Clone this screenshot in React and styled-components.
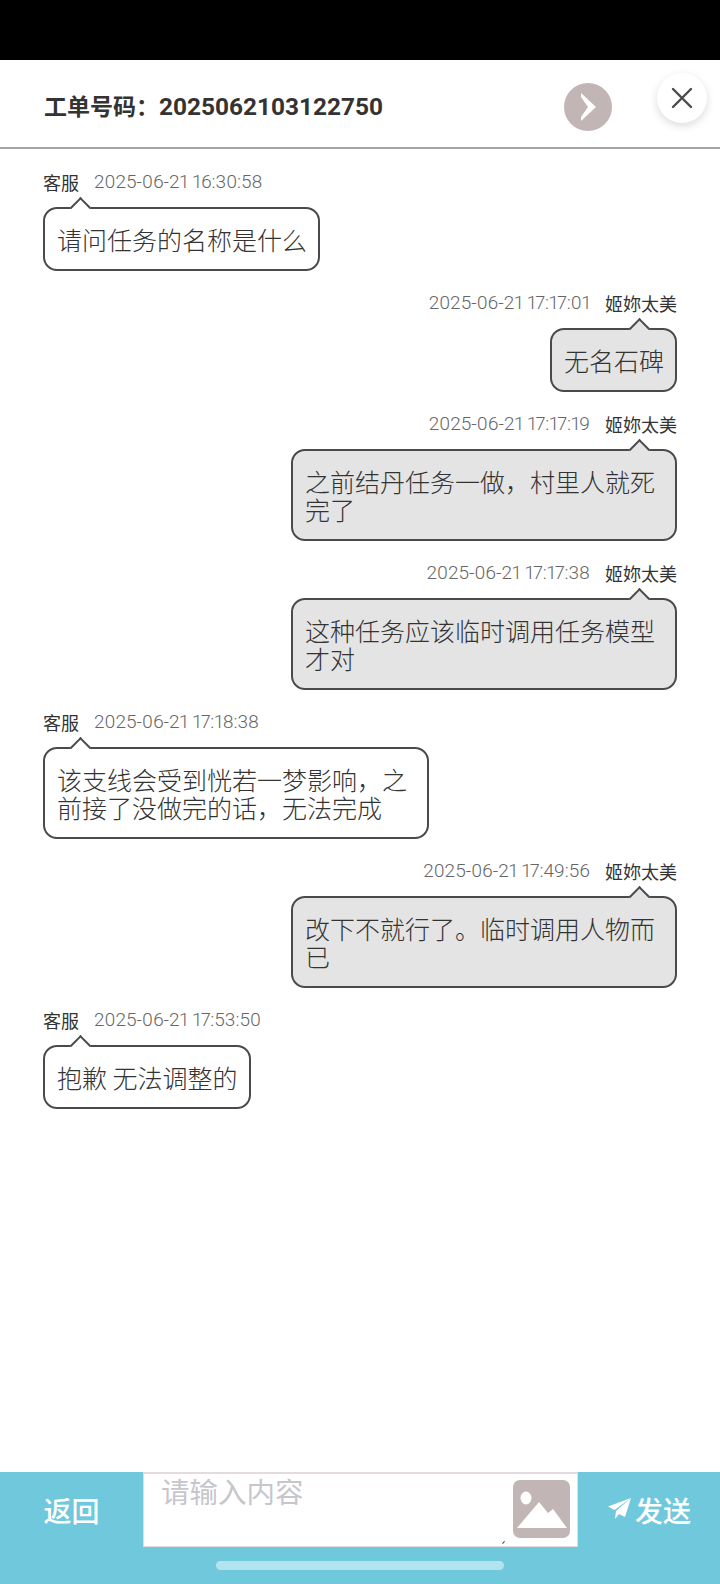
import React from 'react';
import styled, { createGlobalStyle } from 'styled-components';

const GlobalStyle = createGlobalStyle`
  html, body {
    margin: 0;
    padding: 0;
    background: #fff;
  }
  body {
    font-family: "Noto Sans CJK SC", "Noto Sans", sans-serif;
  }
`;

const Page = styled.div`
  width: 720px;
  height: 1584px;
  display: flex;
  flex-direction: column;
  overflow: hidden;
`;

const StatusBar = styled.div`
  height: 60px;
  flex-shrink: 0;
  background: #000;
`;

const Header = styled.header`
  height: 89px;
  flex-shrink: 0;
  box-sizing: border-box;
  display: flex;
  align-items: center;
  padding: 6px 13px 0 44px;
  border-bottom: 2px solid #a3a3a3;
`;

const Title = styled.h1`
  flex: 1;
  margin: -4px 0 0;
  font-size: 23px;
  font-weight: 700;
  color: #333;
  white-space: nowrap;
`;

const TicketNumber = styled.span`
  font-family: "Roboto", sans-serif;
  font-size: 24.4px;
  font-weight: 700;
`;

const NextButton = styled.button`
  width: 48px;
  height: 48px;
  padding: 0;
  margin-right: 45px;
  border: 0;
  border-radius: 50%;
  background: #c2b5b6;
  display: flex;
  align-items: center;
  justify-content: center;
`;

const CloseButton = styled.button`
  width: 50px;
  height: 50px;
  padding: 0;
  margin-top: -17px;
  border: 0;
  border-radius: 50%;
  background: #fff;
  box-shadow: 0 3px 8px rgba(0, 0, 0, 0.14);
  display: flex;
  align-items: center;
  justify-content: center;
`;

const Messages = styled.main`
  flex: 1;
  display: flex;
  flex-direction: column;
  gap: 19px;
  padding: 20px 43px 0 43px;
`;

const Message = styled.div`
  display: flex;
  flex-direction: column;
  align-items: ${p => (p.$mine ? 'flex-end' : 'flex-start')};
`;

const Meta = styled.div`
  height: 25px;
  margin-bottom: 13px;
  display: flex;
  flex-direction: ${p => (p.$mine ? 'row-reverse' : 'row')};
  align-items: center;
  gap: 15px;
`;

const Sender = styled.span`
  font-size: 18px;
  color: #333;
`;

const Time = styled.span`
  font-family: "Roboto", sans-serif;
  font-size: 19px;
  font-weight: 300;
  font-variant-numeric: proportional-nums;
  color: #666;
`;

const Bubble = styled.div`
  position: relative;
  box-sizing: border-box;
  max-width: 386px;
  padding: 16px 11px 16px 12px;
  border: 2px solid #4a4a4a;
  border-radius: 14px;
  background: ${p => (p.$mine ? '#e4e4e4' : '#fff')};
  font-size: 25px;
  font-weight: 300;
  line-height: 28px;
  color: #333;

  &::before {
    content: '';
    position: absolute;
    top: -9px;
    ${p => (p.$mine ? 'right: 28px;' : 'left: 28px;')}
    width: 15px;
    height: 15px;
    box-sizing: border-box;
    background: ${p => (p.$mine ? '#e4e4e4' : '#fff')};
    border-top: 2px solid #4a4a4a;
    border-left: 2px solid #4a4a4a;
    transform: rotate(45deg);
  }
`;

const Footer = styled.footer`
  flex-shrink: 0;
  height: 112px;
  display: flex;
  flex-direction: column;
  background: #6fc8dc;
`;

const InputRow = styled.div`
  height: 75px;
  display: flex;
`;

const BarButton = styled.button`
  width: ${p => p.$width}px;
  flex-shrink: 0;
  padding: 0;
  border: 0;
  background: transparent;
  color: #fff;
  font-family: inherit;
  font-size: 28px;
  font-weight: 500;
  display: flex;
  align-items: center;
  justify-content: center;
  gap: 3px;
`;

const InputBox = styled.div`
  position: relative;
  flex: 1;
  box-sizing: border-box;
  display: flex;
  background: #fff;
  border: 1px solid #e3dbdd;
  border-top-width: 2px;

  /* grip left on the text field */
  &::after {
    content: '';
    position: absolute;
    left: 358px;
    bottom: 3px;
    width: 3px;
    height: 1px;
    background: #444;
    transform: rotate(-45deg);
  }
`;

const TextInput = styled.textarea`
  flex: 1;
  box-sizing: border-box;
  margin: 0;
  padding: 0 0 0 17px;
  border: 0;
  outline: 0;
  resize: none;
  background: transparent;
  font-family: inherit;
  font-size: 28.5px;
  line-height: 34px;
  color: #333;

  &::placeholder {
    color: #c6c6cc;
    opacity: 1;
  }
`;

const PictureButton = styled.div`
  width: 57px;
  height: 58px;
  margin: 6px 7px 0 6px;
  flex-shrink: 0;
`;

const HomeBar = styled.div`
  align-self: center;
  width: 288px;
  height: 9px;
  margin-top: 14px;
  border-radius: 5px;
  background: #b3e3ee;
`;

const messages = [
  { who: '客服', time: '2025-06-21 16:30:58', text: '请问任务的名称是什么' },
  { mine: true, who: '姬妳太美', time: '2025-06-21 17:17:01', text: '无名石碑' },
  { mine: true, who: '姬妳太美', time: '2025-06-21 17:17:19', text: '之前结丹任务一做，村里人就死完了' },
  { mine: true, who: '姬妳太美', time: '2025-06-21 17:17:38', text: '这种任务应该临时调用任务模型才对' },
  { who: '客服', time: '2025-06-21 17:18:38', text: '该支线会受到恍若一梦影响，之前接了没做完的话，无法完成' },
  { mine: true, who: '姬妳太美', time: '2025-06-21 17:49:56', text: '改下不就行了。临时调用人物而已' },
  { who: '客服', time: '2025-06-21 17:53:50', text: '抱歉 无法调整的' },
];

const App = () => (
  <Page>
    <GlobalStyle />
    <StatusBar />
    <Header>
      <Title>
        工单号码：<TicketNumber>2025062103122750</TicketNumber>
      </Title>
      <NextButton aria-label="下一个">
        <svg width="20" height="30" viewBox="0 0 20 30">
          <path d="M3 1 L18 15 L3 29 L3 25 L10 15 L3 5 Z" fill="#fff" />
        </svg>
      </NextButton>
      <CloseButton aria-label="关闭">
        <svg width="22" height="22" viewBox="0 0 22 22">
          <path d="M2 2 L20 20 M20 2 L2 20" stroke="#4a4a4a" strokeWidth="2.4" strokeLinecap="round" />
        </svg>
      </CloseButton>
    </Header>

    <Messages>
      {messages.map(m => (
        <Message key={m.time} $mine={m.mine}>
          <Meta $mine={m.mine}>
            <Sender>{m.who}</Sender>
            <Time>{m.time}</Time>
          </Meta>
          <Bubble $mine={m.mine}>{m.text}</Bubble>
        </Message>
      ))}
    </Messages>

    <Footer>
      <InputRow>
        <BarButton $width={143}>返回</BarButton>
        <InputBox>
          <TextInput placeholder="请输入内容" />
          <PictureButton>
            <svg width="57" height="58" viewBox="0 0 57 58">
              <rect width="57" height="58" rx="7" fill="#c2b5b6" />
              <ellipse cx="13" cy="18" rx="5.5" ry="6.5" fill="#fff" />
              <path d="M4 48 L26 22 L35 33 L40 29 L54 48 Z" fill="#fff" />
            </svg>
          </PictureButton>
        </InputBox>
        <BarButton $width={142}>
          <svg width="25" height="25" viewBox="0 0 25 25">
            <path d="M24 1 L1 9.5 L7.5 13 Z M24 1 L9 14 L8 22 L12 17 L18 20 Z" fill="#fff" />
          </svg>
          发送
        </BarButton>
      </InputRow>
      <HomeBar />
    </Footer>
  </Page>
);

export default App;
